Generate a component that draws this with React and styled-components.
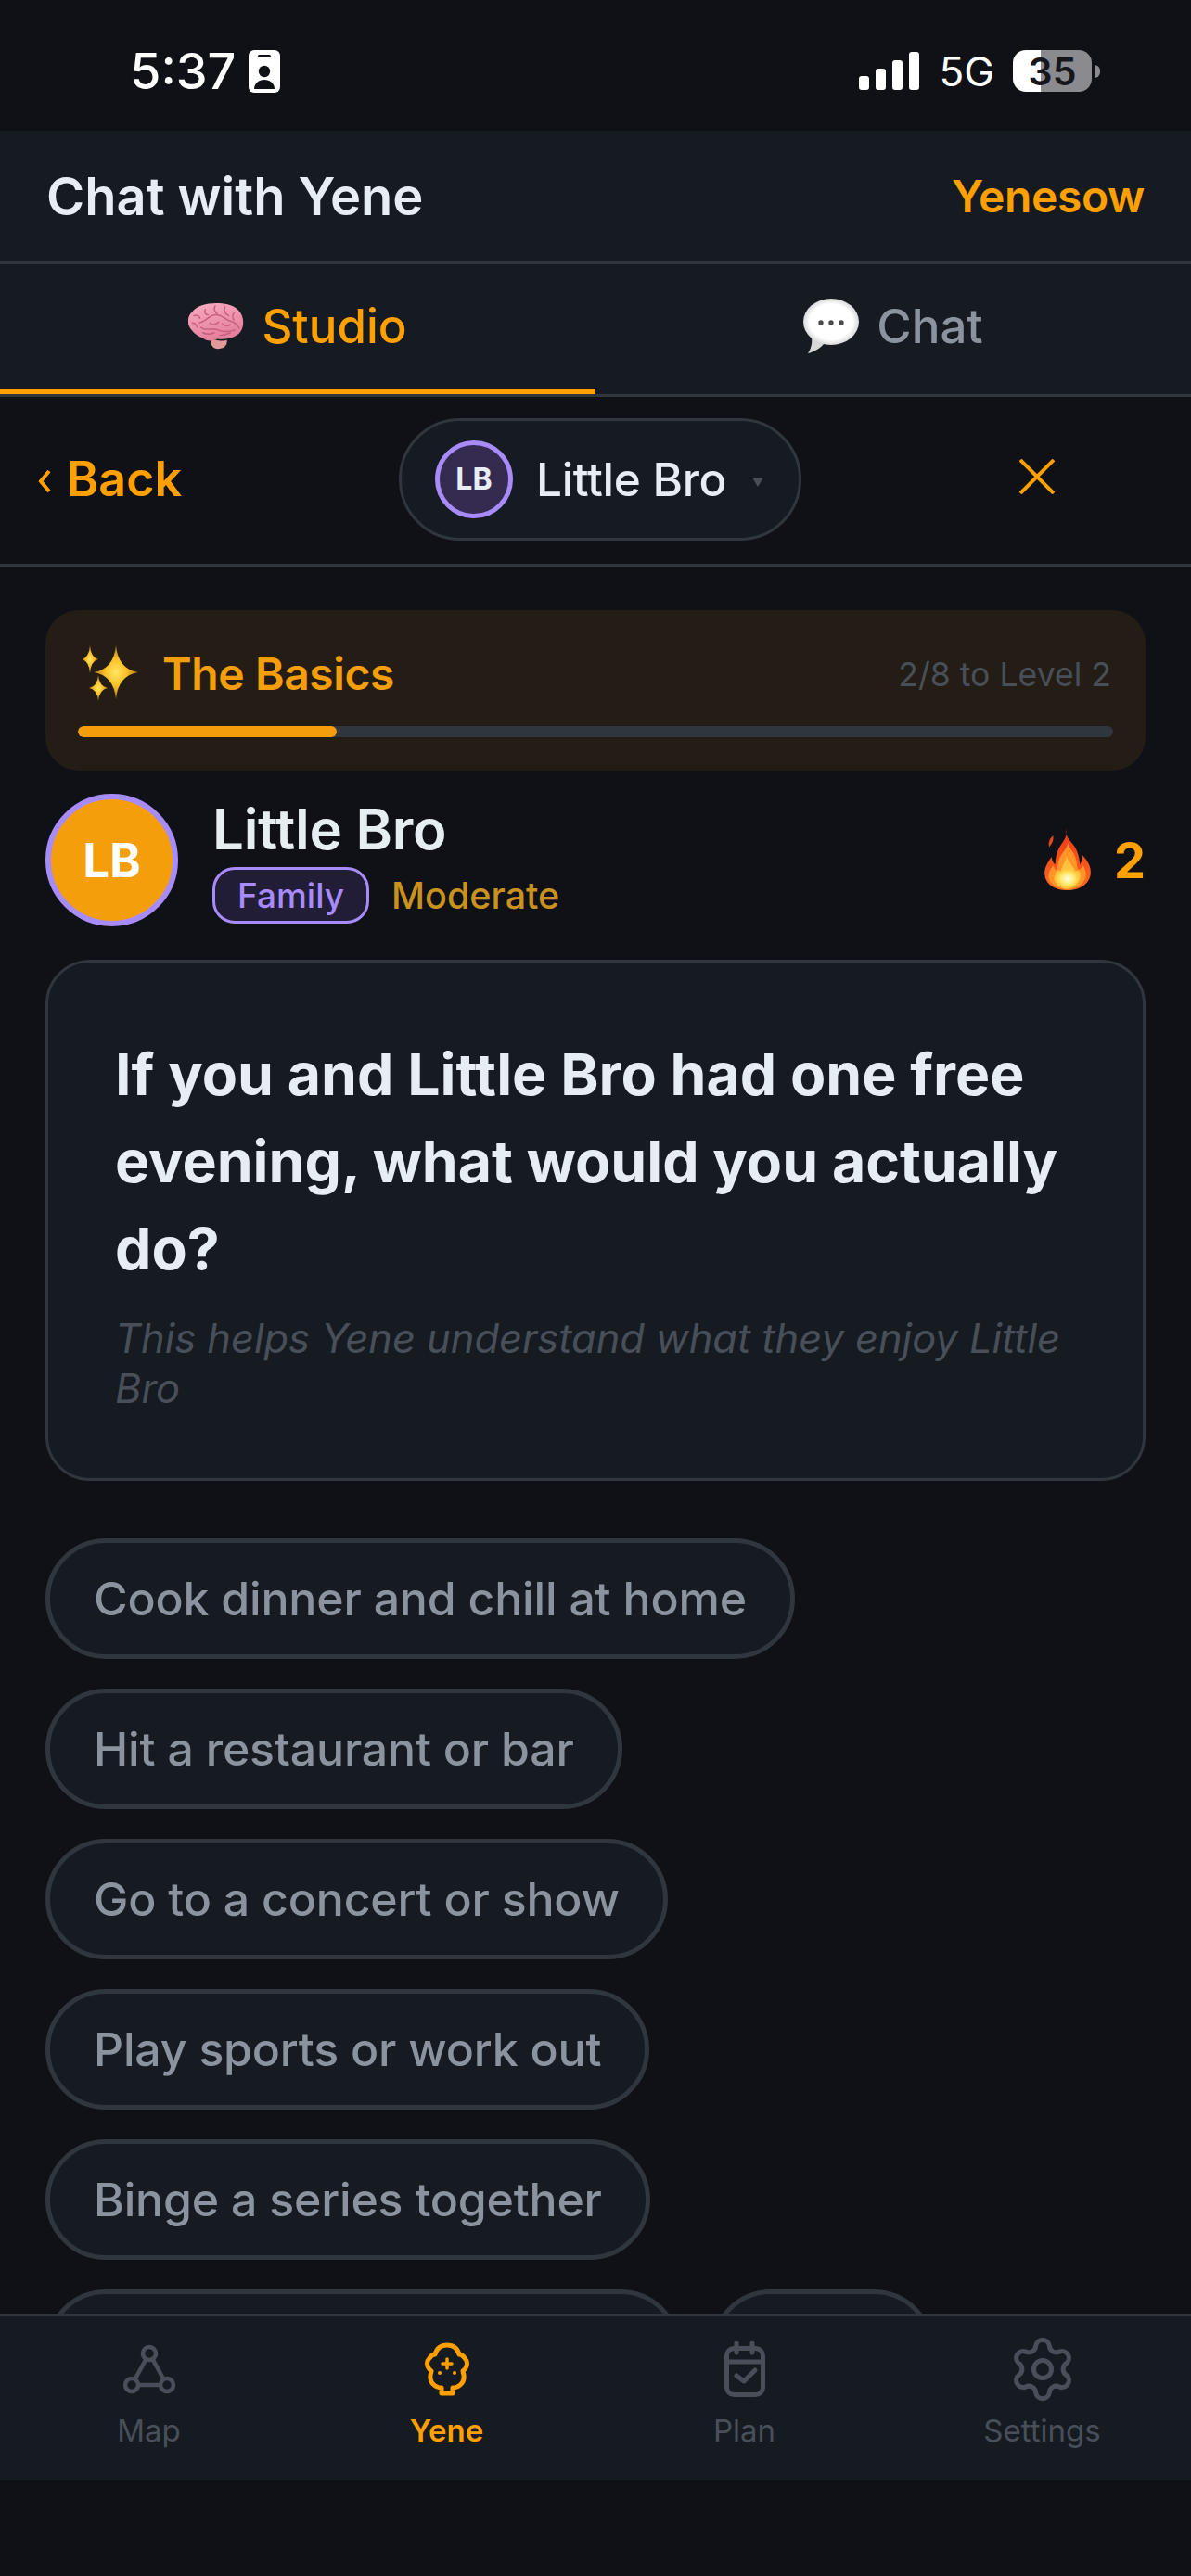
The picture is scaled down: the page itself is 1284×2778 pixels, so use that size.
import React from 'react';
import styled, { createGlobalStyle } from 'styled-components';
import { Settings } from 'lucide-react';

const GlobalStyle = createGlobalStyle`
  html, body {
    margin: 0;
    background: #0f1117;
  }
  * { box-sizing: border-box; }
`;

const Screen = styled.div`
  width: 1284px;
  height: 2778px;
  background: #0f1117;
  display: flex;
  flex-direction: column;
  overflow: hidden;
  font-family: Inter, "Liberation Sans", sans-serif;
`;

const StatusBar = styled.div`
  height: 141px;
  flex: none;
  display: flex;
  align-items: center;
  justify-content: space-between;
  padding: 12px 98px 0 140px;
  color: #fff;
`;

const StatusGroup = styled.div`
  display: flex;
  align-items: center;
  gap: ${p => p.$gap}px;
`;

const Clock = styled.span`
  font-size: 54px;
  font-weight: 500;
`;

const Network = styled.span`
  font-size: 44px;
  font-weight: 400;
`;

const Battery = styled.div`
  display: flex;
  align-items: center;
  gap: 3px;
`;

const BatteryBody = styled.div`
  width: 85px;
  height: 45px;
  border-radius: 14px;
  background: linear-gradient(90deg, #fff ${p => p.$level}%, #8a8a8f ${p => p.$level}%);
  color: #16171c;
  font-size: 41px;
  font-weight: 600;
  display: flex;
  align-items: center;
  justify-content: center;
`;

const BatteryTip = styled.div`
  width: 6px;
  height: 14px;
  background: #8a8a8f;
  border-radius: 0 6px 6px 0;
`;

const Header = styled.header`
  height: 144px;
  flex: none;
  background: #161b22;
  border-bottom: 3px solid #30363d;
  display: flex;
  align-items: center;
  justify-content: space-between;
  padding: 0 50px;
`;

const Title = styled.h1`
  margin: 0;
  color: #e6edf3;
  font-size: 56px;
  font-weight: 600;
`;

const Account = styled.span`
  color: #ff9f00;
  font-size: 48px;
  font-weight: 600;
  letter-spacing: -0.4px;
`;

const Tabs = styled.nav`
  height: 143px;
  flex: none;
  background: #161b22;
  border-bottom: 3px solid #30363d;
  display: grid;
  grid-template-columns: 642px 642px;
`;

const Tab = styled.div`
  height: 140px;
  display: flex;
  align-items: center;
  justify-content: center;
  gap: 19px;
  padding-bottom: 1px;
  border-bottom: 6px solid ${p => p.$active ? '#ff9f00' : 'transparent'};
  color: ${p => p.$active ? '#ff9f00' : '#8b949e'};
  font-size: 51px;
  font-weight: 500;
`;

const SubBar = styled.div`
  height: 183px;
  flex: none;
  border-bottom: 3px solid #30363d;
  display: grid;
  grid-template-columns: 1fr auto 1fr;
  align-items: center;
  padding: 0 40px 3px;
`;

const BackLink = styled.div`
  display: flex;
  align-items: center;
  gap: 16px;
  color: #ff9f00;
  font-size: 52px;
  font-weight: 600;
`;

const Chevron = styled.svg`
  width: 16px;
  height: 28px;
  margin-top: 5px;
  fill: none;
  stroke: #ff9f00;
  stroke-width: 4;
`;

const PersonPill = styled.div`
  width: 434px;
  height: 132px;
  margin-left: 10px;
  border-radius: 66px;
  background: #161b22;
  border: 3px solid #30363d;
  display: flex;
  align-items: center;
  padding-left: 36px;
`;

const SmallAvatar = styled.div`
  width: 84px;
  height: 84px;
  border-radius: 50%;
  border: 5px solid #a78bfa;
  background: #352b50;
  color: #e6edf3;
  font-size: 32px;
  font-weight: 700;
  display: flex;
  align-items: center;
  justify-content: center;
`;

const PillName = styled.span`
  margin-left: 25px;
  color: #e6edf3;
  font-size: 49.5px;
  font-weight: 500;
  letter-spacing: -0.3px;
`;

const Caret = styled.span`
  margin-left: 28px;
  margin-top: 6px;
  width: 0;
  height: 0;
  border-left: 6px solid transparent;
  border-right: 6px solid transparent;
  border-top: 10px solid #484f58;
`;

const CloseWrap = styled.div`
  justify-self: end;
  display: flex;
  padding-right: 107px;
  padding-bottom: 6px;
`;

const Scroll = styled.main`
  flex: 1;
  min-height: 0;
  overflow: hidden;
  padding: 47px 49px 0;
`;

const LevelCard = styled.section`
  height: 173px;
  border-radius: 36px;
  background: #231d16;
  padding: 37px 35px 0;
`;

const LevelRow = styled.div`
  display: flex;
  align-items: center;
  justify-content: space-between;
  height: 62px;
  padding-left: 5px;
`;

const LevelName = styled.div`
  display: flex;
  align-items: center;
  gap: 26px;
  color: #f59e0b;
  font-size: 48px;
  font-weight: 600;
  letter-spacing: -0.4px;
`;

const LevelCount = styled.span`
  color: #484f58;
  font-size: 35.6px;
  margin: 2px 2px 0 0;
`;

const Track = styled.div`
  height: 12px;
  margin-top: 26px;
  border-radius: 6px;
  background: #30363d;
  overflow: hidden;
`;

const TrackFill = styled.div`
  height: 100%;
  border-radius: 6px;
  background: #f59e0b;
`;

const Profile = styled.section`
  height: 144px;
  margin-top: 24px;
  display: flex;
  align-items: center;
`;

const BigAvatar = styled.div`
  width: 143px;
  height: 143px;
  flex: none;
  border-radius: 50%;
  border: 6px solid #a78bfa;
  background: #f59e0b;
  color: #fff;
  font-size: 51px;
  font-weight: 700;
  display: flex;
  align-items: center;
  justify-content: center;
`;

const ProfileInfo = styled.div`
  flex: 1;
  margin-left: 37px;
`;

const ProfileName = styled.div`
  color: #e6edf3;
  font-size: 60px;
  font-weight: 600;
  line-height: 72px;
  letter-spacing: -0.3px;
`;

const TagRow = styled.div`
  display: flex;
  align-items: center;
  gap: 24px;
  margin-top: 5px;
`;

const Tag = styled.span`
  height: 61px;
  width: 169px;
  border-radius: 24px;
  border: 3px solid #a78bfa;
  background: #221d36;
  color: #a78bfa;
  font-size: 37px;
  font-weight: 500;
  display: flex;
  align-items: center;
  justify-content: center;
`;

const Intensity = styled.span`
  color: #c9921f;
  font-size: 39.5px;
  font-weight: 500;
`;

const Streak = styled.div`
  display: flex;
  align-items: center;
  gap: 24px;
  color: #ff9f00;
  font-size: 54px;
  font-weight: 700;
`;

const QuestionCard = styled.section`
  height: 562px;
  margin-top: 36px;
  border-radius: 48px;
  background: #161b22;
  border: 3px solid #30363d;
  padding: 73px 72px 0;
`;

const Question = styled.h2`
  margin: 0;
  color: #e6edf3;
  font-size: 62.5px;
  font-weight: 700;
  line-height: 94px;
`;

const Hint = styled.p`
  margin: 23px 0 0;
  color: #484f58;
  font-size: 43.4px;
  font-style: italic;
  line-height: 54px;
`;

const Options = styled.div`
  display: flex;
  flex-direction: column;
  align-items: flex-start;
  gap: 32px;
  margin-top: 62px;
`;

const OptionRow = styled.div`
  display: flex;
  gap: 32px;
`;

const Option = styled.button`
  height: 130px;
  width: ${p => p.$width ? `${p.$width}px` : 'auto'};
  padding: 0 47px;
  border-radius: 65px;
  background: #161b22;
  border: 5px solid #30363d;
  color: #8b949e;
  font-family: inherit;
  font-size: 50px;
  font-weight: 500;
  letter-spacing: -0.2px;
  white-space: nowrap;
`;

const BottomNav = styled.nav`
  height: 180px;
  flex: none;
  background: #161b22;
  border-top: 3px solid #30363d;
  display: grid;
  grid-template-columns: repeat(4, 321px);
`;

const NavItem = styled.div`
  display: flex;
  flex-direction: column;
  align-items: center;
  color: ${p => p.$active ? '#ff9f00' : '#484f58'};
  font-size: 33px;
  font-weight: ${p => p.$active ? 600 : 400};
  padding-top: 22px;
`;

const NavIconBox = styled.div`
  height: 70px;
  display: flex;
  align-items: center;
  justify-content: center;
  color: inherit;
`;

const NavLabel = styled.span`
  margin-top: 11px;
`;

const SafeArea = styled.div`
  height: 103px;
  flex: none;
  background: #0f1117;
`;

const BadgeIcon = () => (
  <svg width="34" height="46" viewBox="0 0 34 46" fill="none">
    <rect width="34" height="46" rx="6" fill="#fff" />
    <rect x="10" y="5" width="14" height="3" rx="1.5" fill="#0f1117" />
    <circle cx="17" cy="23" r="6.2" fill="#0f1117" />
    <path d="M6 42c0-6 5-10 11-10s11 4 11 10H6z" fill="#0f1117" />
  </svg>
);

const SignalIcon = () => (
  <svg width="66" height="42" viewBox="0 0 66 42" fill="#fff">
    <rect x="0" y="26" width="11" height="15" rx="3" />
    <rect x="18" y="18" width="11" height="23" rx="3" />
    <rect x="36" y="9" width="11" height="32" rx="3" />
    <rect x="54" y="0" width="11" height="41" rx="3" />
  </svg>
);

const BrainEmoji = () => (
  <svg width="60" height="50" viewBox="0 0 62 52" fill="none">
    <defs>
      <linearGradient id="brainFill" x1="0" y1="0" x2="0.4" y2="1">
        <stop offset="0" stopColor="#f8aec2" />
        <stop offset="1" stopColor="#e57f9c" />
      </linearGradient>
    </defs>
    <path d="M30 41c5 1 10 2 13 0 1 5-2 9-8 10-7 1-10-4-10-9z" fill="#e09a98" />
    <path d="M4 10C9 3 20 0 31 0c12 0 25 3 29 14 3 8 1 18-6 22-6 4-15 5-22 4-4 3-12 3-16-1C9 37 2 30 0 24-1 18 0 14 4 10z" fill="url(#brainFill)" />
    <g stroke="#c85f80" strokeWidth="1.5" fill="none" strokeLinecap="round">
      <path d="M12 22c8-1 10-9 19-9 8 0 10 6 16 7 4 1 8 4 10 8" />
      <path d="M14 27c4 5 14 0 19 3 5 2 13 2 19 0" />
      <path d="M19 7c-2 3 0 6 3 6M30 3c-2 3-1 6 2 9M41 4c-2 4 0 8 4 10M52 10c-3 2-3 6-1 9" />
      <path d="M6 14c3-1 6 0 7 3M4 22c3 0 5 2 6 5M24 22c3 3 8 2 10-1M38 23c2 3 6 3 9 1" />
      <path d="M16 33c4 2 9 2 13 0M35 36c4 0 8-1 12-3" />
    </g>
  </svg>
);

const BubbleEmoji = () => (
  <svg width="60" height="60" viewBox="0 0 60 60" fill="none">
    <defs>
      <radialGradient id="bubbleFill" cx="0.5" cy="0.5" r="0.55">
        <stop offset="0.7" stopColor="#fff" />
        <stop offset="1" stopColor="#c8c8c8" />
      </radialGradient>
    </defs>
    <path d="M9 42c1 6-1 13-4 17 6-1 14-6 18-11z" fill="#d8d8d8" />
    <ellipse cx="30" cy="25" rx="30" ry="25" fill="url(#bubbleFill)" />
    <circle cx="19" cy="26" r="2.7" fill="#4a4a4a" />
    <circle cx="30" cy="26" r="2.7" fill="#4a4a4a" />
    <circle cx="41" cy="26" r="2.7" fill="#4a4a4a" />
  </svg>
);

const star = (cx, cy, rx, ry) =>
  `M${cx} ${cy - ry}Q${cx + rx * 0.1} ${cy - ry * 0.12} ${cx + rx} ${cy}Q${cx + rx * 0.1} ${cy + ry * 0.12} ${cx} ${cy + ry}Q${cx - rx * 0.1} ${cy + ry * 0.12} ${cx - rx} ${cy}Q${cx - rx * 0.1} ${cy - ry * 0.12} ${cx} ${cy - ry}z`;

const SparklesEmoji = () => (
  <svg width="60" height="60" viewBox="0 0 60 60" fill="none">
    <defs>
      <radialGradient id="sparkFill" cx="0.5" cy="0.5" r="0.5">
        <stop offset="0" stopColor="#ffe566" />
        <stop offset="0.5" stopColor="#fbbf24" />
        <stop offset="1" stopColor="#a8702a" />
      </radialGradient>
    </defs>
    <path d={star(36, 29, 24, 29)} fill="url(#sparkFill)" />
    <path d={star(8, 15, 9, 15)} fill="url(#sparkFill)" />
    <path d={star(17, 46, 10, 14)} fill="url(#sparkFill)" />
  </svg>
);

const FlameEmoji = () => (
  <svg width="52" height="66" viewBox="0 0 50 64" fill="none">
    <defs>
      <radialGradient id="flameCore" cx="0.5" cy="0.5" r="0.5">
        <stop offset="0" stopColor="#fffde0" />
        <stop offset="0.55" stopColor="#ffe867" />
        <stop offset="1" stopColor="#ffc43a" stopOpacity="0" />
      </radialGradient>
      <linearGradient id="flameOuter" x1="0" y1="0" x2="0" y2="1">
        <stop offset="0" stopColor="#e8381c" />
        <stop offset="1" stopColor="#ff6a1f" />
      </linearGradient>
    </defs>
    <path d="M24 0c-2 8 3 11 8 18 4 6 5 12 6 19 2-3 3-7 2-10 5 5 10 12 9 20-1 10-11 17-24 17S1 58 1 46c0-7 4-12 7-17 1 4 2 7 4 8 0-5 1-10 3-15 3-7 10-12 9-22z" fill="url(#flameOuter)" />
    <path d="M6 12c1-3 3-4 4-5 0 3 0 5-1 7-1 2-3 4-3 5-1-2-1-5 0-7z" fill="#e8451f" />
    <path d="M25 14c1 6 6 9 8 15 2 6 2 12 3 14 3-1 4-3 5-5 2 3 4 8 3 12-2 8-10 13-20 13S6 58 5 50c0-5 2-8 5-12 1 3 2 5 4 5 1-8 2-12 5-17 3-4 6-7 6-12z" fill="#ff9526" />
    <path d="M24 28c1 6 7 10 9 17 2-1 3-2 3-3 2 3 3 6 2 9-2 7-8 11-14 11s-12-4-13-10c0-4 2-7 4-9 1 1 2 2 3 2 0-6 5-10 6-17z" fill="#ffc23d" />
    <ellipse cx="25" cy="52" rx="14" ry="12" fill="url(#flameCore)" />
  </svg>
);

const CloseIcon = () => (
  <svg width="38" height="38" viewBox="0 0 38 38" fill="none" stroke="#ff9f00" strokeWidth="4">
    <path d="M1 1l36 36M37 1L1 37" />
  </svg>
);

const MapIcon = () => (
  <svg width="58" height="54" viewBox="0 0 58 54" fill="none" stroke="currentColor" strokeWidth="4.5">
    <circle cx="29" cy="10" r="7" />
    <circle cx="10" cy="44" r="7" />
    <circle cx="48" cy="44" r="7" />
    <path d="M25.5 16L13.5 38M32.5 16l12 22M17 44h24" />
  </svg>
);

const YeneIcon = () => (
  <svg width="48" height="58" viewBox="0 0 48 58" fill="none" stroke="currentColor" strokeWidth="5" strokeLinejoin="round">
    <path d="M18 55V49C11 49 5 43 6 36 6 34 7 32 7 31 2 27 1 21 5 17 7 14 9 13 11 13 13 6 18 3 24 3 30 3 35 6 37 13 39 13 41 14 43 17 47 21 46 27 41 31 41 32 42 34 42 36 43 43 37 49 30 49V55z" />
    <path d="M24 18v10M19 23h10" strokeWidth="3.5" strokeLinecap="round" />
    <circle cx="16" cy="33" r="2" fill="currentColor" stroke="none" />
    <circle cx="32" cy="33" r="2" fill="currentColor" stroke="none" />
  </svg>
);

const PlanIcon = () => (
  <svg width="44" height="60" viewBox="0 0 44 60" fill="none" stroke="currentColor" strokeWidth="5" strokeLinecap="round" strokeLinejoin="round">
    <rect x="2.5" y="7.5" width="39" height="50" rx="8" />
    <path d="M2.5 22h39M13 2v10M30 2v10" />
    <path d="M13 37l8 6 12-12" />
  </svg>
);

const options = [
  'Cook dinner and chill at home',
  'Hit a restaurant or bar',
  'Go to a concert or show',
  'Play sports or work out',
  'Binge a series together',
];

const navItems = [
  { label: 'Map', icon: <MapIcon /> },
  { label: 'Yene', icon: <YeneIcon />, active: true },
  { label: 'Plan', icon: <PlanIcon /> },
  { label: 'Settings', icon: <Settings size={76} strokeWidth={1.6} /> },
];

export default function App() {
  return (
    <Screen>
      <GlobalStyle />
      <StatusBar>
        <StatusGroup $gap={14}>
          <Clock>5:37</Clock>
          <BadgeIcon />
        </StatusGroup>
        <StatusGroup $gap={20}>
          <SignalIcon />
          <Network>5G</Network>
          <Battery>
            <BatteryBody $level={35}>35</BatteryBody>
            <BatteryTip />
          </Battery>
        </StatusGroup>
      </StatusBar>

      <Header>
        <Title>Chat with Yene</Title>
        <Account>Yenesow</Account>
      </Header>

      <Tabs>
        <Tab $active>
          <BrainEmoji />
          Studio
        </Tab>
        <Tab>
          <BubbleEmoji />
          Chat
        </Tab>
      </Tabs>

      <SubBar>
        <BackLink>
          <Chevron viewBox="0 0 16 28"><path d="M13 3L4 14l9 11" /></Chevron>
          Back
        </BackLink>
        <PersonPill>
          <SmallAvatar>LB</SmallAvatar>
          <PillName>Little Bro</PillName>
          <Caret />
        </PersonPill>
        <CloseWrap><CloseIcon /></CloseWrap>
      </SubBar>

      <Scroll>
        <LevelCard>
          <LevelRow>
            <LevelName>
              <SparklesEmoji />
              The Basics
            </LevelName>
            <LevelCount>2/8 to Level 2</LevelCount>
          </LevelRow>
          <Track>
            <TrackFill style={{ width: `${(2 / 8) * 100}%` }} />
          </Track>
        </LevelCard>

        <Profile>
          <BigAvatar>LB</BigAvatar>
          <ProfileInfo>
            <ProfileName>Little Bro</ProfileName>
            <TagRow>
              <Tag>Family</Tag>
              <Intensity>Moderate</Intensity>
            </TagRow>
          </ProfileInfo>
          <Streak>
            <FlameEmoji />
            2
          </Streak>
        </Profile>

        <QuestionCard>
          <Question>If you and Little Bro had one free evening, what would you actually do?</Question>
          <Hint>This helps Yene understand what they enjoy Little Bro</Hint>
        </QuestionCard>

        <Options>
          {options.map(text => <Option key={text}>{text}</Option>)}
          {/* last row sits behind the tab bar, only the top of the pills shows */}
          <OptionRow>
            <Option $width={685} />
            <Option $width={241} />
          </OptionRow>
        </Options>
      </Scroll>

      <BottomNav>
        {navItems.map(item => (
          <NavItem key={item.label} $active={item.active}>
            <NavIconBox>{item.icon}</NavIconBox>
            <NavLabel>{item.label}</NavLabel>
          </NavItem>
        ))}
      </BottomNav>
      <SafeArea />
    </Screen>
  );
}
